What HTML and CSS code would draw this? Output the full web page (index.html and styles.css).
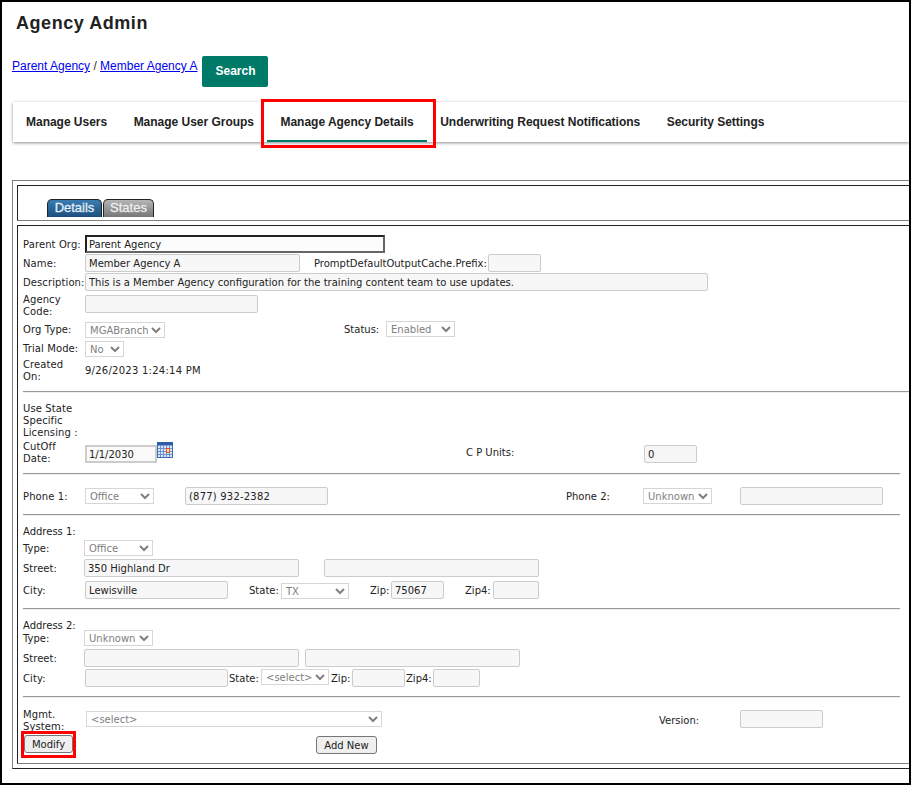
FILE: index.html
```html
<!DOCTYPE html>
<html lang="en">
<head>
<meta charset="utf-8">
<title>Agency Admin</title>
<link rel="stylesheet" href="styles.css">
</head>
<body>
<div class="frame">
  <h1 class="title">Agency Admin</h1>
  <div class="crumbs">
    <div class="crumb-text"><a href="#">Parent Agency</a> / <a href="#">Member Agency A</a></div>
    <button class="search" type="button">Search</button>
  </div>
  <nav class="nav">
    <a class="nav-item">Manage Users</a>
    <a class="nav-item">Manage User Groups</a>
    <a class="nav-item active">Manage Agency Details</a>
    <a class="nav-item">Underwriting Request Notifications</a>
    <a class="nav-item">Security Settings</a>
  </nav>
  <div class="outer">
    <div class="tabs-cell">
      <span class="tab tab-on">Details</span><span class="tab tab-off">States</span>
    </div>
    <div class="form-cell">
      <div class="row r1"><label class="lab">Parent Org:</label><input class="field focus w300" value="Parent Agency" readonly></div>
      <div class="row r2"><label class="lab">Name:</label><input class="field w215" value="Member Agency A" readonly><label class="lab-auto ml14 w174">PromptDefaultOutputCache.Prefix:</label><input class="field w53" readonly></div>
      <div class="row r2"><label class="lab">Description:</label><input class="field w623" value="This is a Member Agency configuration for the training content team to use updates." readonly></div>
      <div class="row r4"><label class="lab">Agency Code:</label><input class="field w173 lift" readonly></div>
      <div class="row r5"><label class="lab">Org Type:</label><select class="sel w80" disabled><option>MGABranch</option></select><label class="lab-auto ml179 w42">Status:</label><select class="sel w69 lift" disabled><option>Enabled</option></select></div>
      <div class="row r6"><label class="lab">Trial Mode:</label><select class="sel w39" disabled><option>No</option></select></div>
      <div class="row r7"><label class="lab">Created<br>On:</label><span class="value">9/26/2023 1:24:14 PM</span></div>
      <div class="rule wide"></div>
      <div class="row r8"><label class="lab">Use State Specific Licensing :</label></div>
      <div class="row r9"><label class="lab">CutOff Date:</label><input class="field date w72 drop" value="1/1/2030" readonly>
        <svg class="cal" width="16" height="16" viewBox="0 0 16 16" aria-hidden="true">
          <rect x="0.5" y="0.5" width="15" height="15" fill="#dbe6f5" stroke="#3f6fb5"/>
          <rect x="0" y="0" width="16" height="3" fill="#2f5ca6"/>
          <path d="M1 3.5h14" stroke="#7fa3d8"/>
          <path d="M1 6.5h14M1 9.5h14M1 12.5h14M3.5 3v12M6.5 3v12M9.5 3v12M12.5 3v12" stroke="#6c93cf" fill="none"/>
          <rect x="9.5" y="6.5" width="3" height="4" fill="#fbe3c8" stroke="#e8552b"/>
        </svg>
        <label class="lab-auto ml293 w178">C P Units:</label><input class="field w53 drop" value="0" readonly></div>
      <div class="rule"></div>
      <div class="row r10"><label class="lab">Phone 1:</label><select class="sel w69" disabled><option>Office</option></select><input class="field num ml31 w143" value="(877) 932-2382" readonly><label class="lab-auto ml238 w77">Phone 2:</label><select class="sel w69" disabled><option>Unknown</option></select><input class="field ml28 w143" readonly></div>
      <div class="rule"></div>
      <div class="row r11"><label class="lab-auto">Address 1:</label></div>
      <div class="row r12"><label class="lab-auto w61 lift">Type:</label><select class="sel w69" disabled><option>Office</option></select></div>
      <div class="row r13"><label class="lab-auto w61">Street:</label><input class="field w215" value="350 Highland Dr" readonly><input class="field ml25 w215" readonly></div>
      <div class="row r14"><label class="lab">City:</label><input class="field w143" value="Lewisville" readonly><label class="lab-auto ml21 w32">State:</label><select class="sel w68 sink" disabled><option>TX</option></select><label class="lab-auto ml21 w21">Zip:</label><input class="field w53" value="75067" readonly><label class="lab-auto ml21 w28">Zip4:</label><input class="field w46" readonly></div>
      <div class="rule"></div>
      <div class="row r15"><label class="lab-auto">Address 2:</label></div>
      <div class="row r16"><label class="lab-auto w61">Type:</label><select class="sel w69" disabled><option>Unknown</option></select></div>
      <div class="row r17"><label class="lab-auto w61">Street:</label><input class="field w215" readonly><input class="field ml6 w215" readonly></div>
      <div class="row r18"><label class="lab">City:</label><input class="field w143" readonly><label class="lab-auto ml1 w32">State:</label><select class="sel w68 lift" disabled><option>&lt;select&gt;</option></select><label class="lab-auto ml2 w21">Zip:</label><input class="field w53" readonly><label class="lab-auto ml1 w27">Zip4:</label><input class="field w47" readonly></div>
      <div class="rule"></div>
      <div class="row r19"><label class="lab w63">Mgmt. System:</label><select class="sel w296 lift" disabled><option>&lt;select&gt;</option></select><label class="lab-auto ml277 w81">Version:</label><input class="field w83 lift" readonly></div>
      <div class="row r20"><span class="marked"><button class="btn w49" type="button">Modify</button></span><button class="btn ml243 w61 low" type="button">Add New</button></div>
    </div>
  </div>
</div>
</body>
</html>
```
FILE: styles.css
```css
html, body { margin: 0; padding: 0; background: #fff; }
.frame {
  box-sizing: border-box;
  width: 911px;
  height: 785px;
  border: 2px solid #000;
  overflow: hidden;
  background: #fff;
  font-family: "DejaVu Sans", Verdana, sans-serif;
  font-size: 10px;
  color: #222;
}
.title {
  margin: 11px 0 0 14px;
  font: bold 18px/20px "Liberation Sans", Arial, sans-serif;
  letter-spacing: 0.55px;
  color: #222;
}
.crumbs { display: flex; align-items: flex-start; margin: 23px 0 0 10px; }
.crumb-text { font: 12px/20px "Liberation Sans", Arial, sans-serif; color: #333; }
.crumb-text a { color: #00e; }
.search {
  width: 66px; height: 31px; margin-left: 5px; padding: 0 0 2px;
  border: 0; border-radius: 2px;
  background: #007a68; color: #fff;
  font: bold 12px "Liberation Sans", Arial, sans-serif;
}
.nav {
  display: flex; align-items: stretch;
  height: 40px; margin: 15px 0 0 11px;
  background: #fff;
  box-shadow: 0 1px 3px rgba(0,0,0,.45);
}
.nav-item {
  position: relative;
  display: flex; align-items: center;
  padding: 0 13.5px;
  margin-left: -0.5px;
  font: bold 12px "Liberation Sans", Arial, sans-serif;
  letter-spacing: -0.02px;
  color: #222;
  white-space: nowrap;
}
.nav-item:first-child { padding-left: 13px; margin-left: 0; }
.active::before {
  content: ""; position: absolute;
  left: 0; right: 0; bottom: 0; height: 2px;
  background: #007a68;
}
.active::after {
  content: ""; position: absolute;
  left: -6px; right: -9px; top: -3px; bottom: -6px;
  border: 3px solid #f00;
}
.outer {
  box-sizing: border-box;
  width: 1000px; height: 589px;
  margin: 38px 0 0 10px;
  padding: 4px;
  border: 1px solid;
  border-color: #808080 #222 #222 #808080;
}
.tabs-cell {
  box-sizing: border-box;
  height: 36px;
  padding: 13px 0 0 29px;
  border: 1px solid;
  border-color: #222 #808080 #808080 #222;
  display: flex;
  align-items: flex-start;
}
.tab {
  box-sizing: border-box;
  height: 18px;
  border: 1px solid #222;
  border-bottom: 0;
  border-radius: 5px 5px 0 0;
  text-align: center;
  font: 13px/15px "Liberation Sans", Arial, sans-serif;
  -webkit-text-stroke: 0.3px currentColor;
}
.tab-on { width: 55px; background: linear-gradient(#3b7cb0, #1c4f80); color: #e4eef8; }
.tab-off { width: 51px; margin-left: 1px; background: linear-gradient(#b5b5b5, #777); color: #eee; }
.form-cell {
  box-sizing: border-box;
  height: 539px;
  margin-top: 4px;
  padding-left: 5px;
  border: 1px solid;
  border-color: #222 #808080 #808080 #222;
}
.row { display: flex; align-items: center; white-space: nowrap; line-height: 12px; }
.lab, .lab-auto { flex: none; padding-top: 2px; }
.lab { width: 62px; white-space: normal; letter-spacing: 0.1px; }
.lab.w63 { width: 63px; }
.value { padding-top: 2px; letter-spacing: 0.25px; }
.r5 label, .r6 label { padding-top: 0; }
.r1 { margin-top: 9px; height: 18px; }
.r2 { margin-top: 1px; height: 18px; }
.r4 { margin-top: 2px; height: 24px; }
.r5 { margin-top: 4px; height: 18px; }
.r6 { margin-top: 2px; height: 16px; }
.r7 { margin-top: 1px; height: 24px; }
.r8 { margin-top: 9px; height: 36px; }
.r9 { margin-top: 2px; height: 24px; }
.r10 { margin-top: 12px; height: 18px; }
.r11 { margin-top: 9px; height: 12px; }
.r12 { margin-top: 3px; height: 16px; }
.r13 { margin-top: 3px; height: 18px; }
.r14 { margin-top: 4px; height: 18px; }
.r15 { margin-top: 9px; height: 11px; }
.r16 { height: 16px; }
.r17 { margin-top: 3px; height: 18px; }
.r18 { margin-top: 2px; height: 18px; }
.r19 { margin-top: 10px; height: 24px; }
.r20 { margin-top: 3px; height: 19px; align-items: flex-start; }
.rule {
  box-sizing: border-box;
  width: 877px; height: 2px;
  margin-top: 9px;
  border-top: 1px solid #999;
  border-bottom: 1px solid #eee;
}
.rule.wide { width: 900px; }
.field {
  flex: none;
  box-sizing: border-box;
  height: 18px; padding: 0 3px; margin: 0;
  border: 1px solid #ccc; border-radius: 2px;
  background: #f7f7f7;
  font: 10px "DejaVu Sans", Verdana, sans-serif;
  color: #222;
  outline: none;
}
.num { letter-spacing: 0.2px; }
.focus { border: 2px solid; border-color: #222 #666 #666 #222; border-radius: 0; background: #fcfcfc; padding: 0 2px; }
.date { border: 2px solid #ccc; border-radius: 0; padding: 0 2px; background: #fafafa; }
.sel {
  flex: none;
  box-sizing: border-box;
  height: 16px; margin: 0; padding: 0;
  font: 10px "DejaVu Sans", Verdana, sans-serif;
  background: #fff;
  color: #808080;
  opacity: 1;
}
.lift { margin-bottom: 2px; }
.lab-auto.lift { margin-bottom: 0; }
.sink { margin-top: 2px; }
.drop { margin-top: 4px; }
.cal { flex: none; margin-bottom: 4px; }
.btn {
  flex: none;
  box-sizing: border-box;
  height: 18px; padding: 0;
  border: 1px solid #767676; border-radius: 3px;
  background: #efefef; color: #222;
  font: 10px "DejaVu Sans", Verdana, sans-serif;
}
.low { margin-top: 1px; }
.marked { position: relative; display: block; margin-left: 1px; height: 18px; }
.marked::after {
  content: ""; position: absolute;
  left: -3px; right: -3px; top: -4px; bottom: -5px;
  border: 3px solid #f00;
  pointer-events: none;
}
.ml1 { margin-left: 1px; } .ml2 { margin-left: 2px; } .ml6 { margin-left: 6px; }
.ml14 { margin-left: 14px; } .ml21 { margin-left: 21px; } .ml25 { margin-left: 25px; }
.ml28 { margin-left: 28px; } .ml31 { margin-left: 31px; } .ml179 { margin-left: 179px; }
.ml238 { margin-left: 238px; } .ml243 { margin-left: 243px; } .ml277 { margin-left: 277px; }
.ml293 { margin-left: 293px; }
.w21 { width: 21px; } .w27 { width: 27px; } .w28 { width: 28px; } .w32 { width: 32px; }
.w39 { width: 39px; } .w42 { width: 42px; } .w46 { width: 46px; } .w47 { width: 47px; }
.w49 { width: 49px; } .w53 { width: 53px; } .w61 { width: 61px; } .w68 { width: 68px; }
.w69 { width: 69px; } .w72 { width: 72px; } .w77 { width: 77px; } .w80 { width: 80px; }
.w81 { width: 81px; } .w83 { width: 83px; } .w143 { width: 143px; } .w173 { width: 173px; }
.w174 { width: 174px; } .w178 { width: 178px; } .w215 { width: 215px; } .w296 { width: 296px; }
.w300 { width: 300px; } .w623 { width: 623px; }
```
